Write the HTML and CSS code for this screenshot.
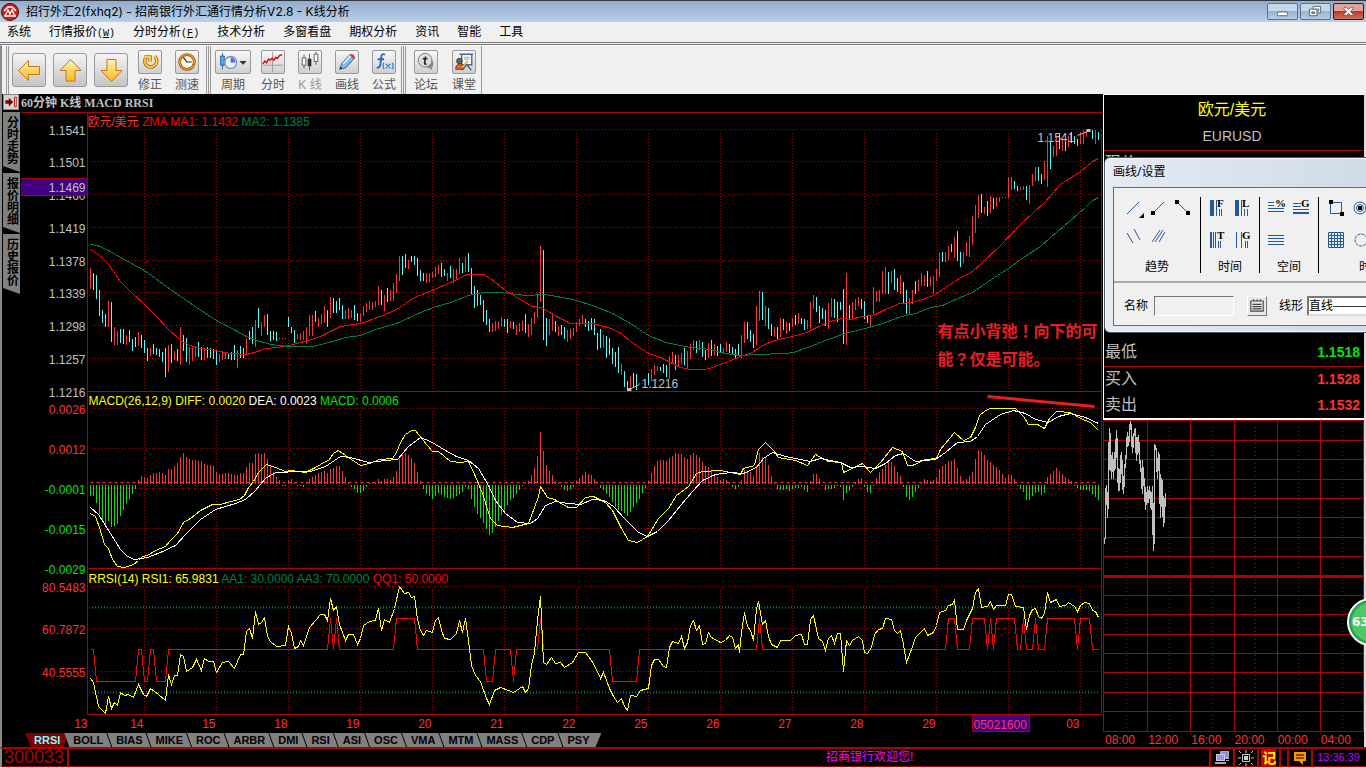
FILE: index.html
```html
<!DOCTYPE html>
<html lang="zh-CN">
<head>
    <meta charset="UTF-8">
    <meta name="viewport" content="width=device-width, initial-scale=1.0">
    <title>K线分析</title>
    <link rel="stylesheet" href="styles.css">
</head>
<body>
    <header class="titlebar">
        <svg class="logo" viewBox="0 0 18 18"><circle cx="9" cy="9" r="8.5" fill="#c8201c" stroke="#5a0c0c"/><path d="M3 8l4-4h4l4 4M4 13l3-6 2 4 2-4 3 6M3 13h12" fill="none" stroke="#fff" stroke-width="1.4"/></svg>
        <h1>招行外汇2(fxhq2) - 招商银行外汇通行情分析V2.8 - K线分析</h1>
        <div class="window-buttons">
            <button aria-label="最小化"><svg viewBox="0 0 30 16"><rect x="9.500" y="8.500" width="11" height="4" rx="1" fill="#fff" stroke="#53606e"/></svg></button>
            <button aria-label="还原"><svg viewBox="0 0 30 16"><path d="M12.500 2.500h8v7h-8zM14.500 5.500h4v2h-4z" fill="#fff" stroke="#53606e"/><path d="M8.500 5.500h8v7h-8z" fill="#fff" stroke="#53606e"/><path d="M11 8.500h3v1.500h-3z" fill="#9ab" stroke="#53606e"/></svg></button>
            <button class="close" aria-label="关闭"><svg viewBox="0 0 30 16"><path d="M10 4h3l2 2 2-2h3v1l-3 3 3 3v1h-3l-2-2-2 2h-3v-1l3-3-3-3z" fill="#fff" stroke="#5a4650" stroke-width=".8"/></svg></button>
        </div>
    </header>

    <nav class="menu">
        <a href="#">系统</a>
        <a href="#">行情报价<span>(<u>W</u>)</span></a>
        <a href="#">分时分析<span>(<u>F</u>)</span></a>
        <a href="#">技术分析</a>
        <a href="#">多窗看盘</a>
        <a href="#">期权分析</a>
        <a href="#">资讯</a>
        <a href="#">智能</a>
        <a href="#">工具</a>
    </nav>

    <svg class="defs" width="0" height="0">
        <defs>
            <linearGradient id="gold" x1="0" y1="0" x2="0" y2="1"><stop offset="0" stop-color="#fff3b8"/><stop offset="1" stop-color="#fdb813"/></linearGradient>
        </defs>
    </svg>

    <div class="toolbar">
        <div class="tool-group">
            <button class="big" aria-label="后退"><svg viewBox="0 0 32 32"><path d="M5.500 16.500l10-10v6h11v8h-11v6z" fill="url(#gold)" stroke="#c07818"/></svg></button>
            <button class="big" aria-label="向上"><svg viewBox="0 0 32 32"><path d="M16.500 5.500l10.500 11h-6v10.500h-9v-10.500h-6z" fill="url(#gold)" stroke="#c07818"/></svg></button>
            <button class="big" aria-label="向下"><svg viewBox="0 0 32 32"><path d="M16.500 27.500l10.500-11h-6v-11h-9v11h-6z" fill="url(#gold)" stroke="#c07818"/></svg></button>
            <button class="tool first"><svg viewBox="0 0 24 24"><path d="M6 6.500h6v5M17 6a6.500 6.500 0 1 1-10 2" fill="none" stroke="#b8701a" stroke-width="4"/><path d="M6 6.500h6v5M17 6a6.500 6.500 0 1 1-10 2" fill="none" stroke="#ffcf4a" stroke-width="2"/></svg><span>修正</span></button>
            <button class="tool"><svg viewBox="0 0 24 24"><circle cx="12" cy="12" r="8" fill="#fffdf0" stroke="#8a4a08" stroke-width="3"/><circle cx="12" cy="12" r="8" fill="none" stroke="#f0a020" stroke-width="1.500"/><path d="M8 7l4 5h5" fill="none" stroke="#222" stroke-width="1.300"/></svg><span>测速</span></button>
        </div>
        <div class="tool-group">
            <button class="tool wide"><svg viewBox="0 0 36 24"><path d="M6.500 2v18" stroke="#1f5f9f"/><path d="M4.500 5.500h4v10h-4z" fill="#5aa8e8" stroke="#1f5f9f"/><circle cx="15.500" cy="12.500" r="6.500" fill="#e8eef8" stroke="#7c93b0" stroke-width="1.500"/><path d="M15.500 7v5.500h5a5.500 5.500 0 0 0-5-5.500z" fill="#4a6fd0"/><path d="M25 11h8l-4 4z" fill="#333"/></svg><span>周期</span></button>
            <button class="tool"><svg viewBox="0 0 24 24"><path d="M11.500 1v22M1 15.500h22" stroke="#999"/><path d="M1 14l2-3 2 2 2-4 2 1 2-2 2 2 2-3 2 1 2-3 3-1" fill="none" stroke="#e00000" stroke-width="1.500"/></svg><span>分时</span></button>
            <button class="tool off"><svg viewBox="0 0 24 24"><path d="M5.500 4v15M11.500 3v18M18.500 1v14" stroke="#555"/><path d="M3.500 7.500h4v8h-4zM16.500 3.500h4v8h-4z" fill="#fff" stroke="#555"/><path d="M9.500 8.500h4v8h-4z" fill="#333"/></svg><span>K 线</span></button>
            <button class="tool"><svg viewBox="0 0 24 24"><path d="M4 20l2-6L15 4l5 4-9 10z" fill="#7fb8ec" stroke="#2f64a0"/><path d="M8 14l8-9" stroke="#d8efff" stroke-width="2"/><path d="M15 4l2-1q3 1 4 4l-2 2z" fill="#e03c48"/><path d="M4 20l1-3 2 2z" fill="#123"/></svg><span>画线</span></button>
            <button class="tool"><svg viewBox="0 0 24 24"><path d="M13 4q-4-2-4 3L8 15q-1 4-4 3M5 9h7" fill="none" stroke="#1c6cc4" stroke-width="2"/><path d="M12 13q-2 3 0 7M21 13q2 3 0 7M14 14l5 5M19 14l-5 5" fill="none" stroke="#2080d8" stroke-width="1.300"/></svg><span>公式</span></button>
        </div>
        <div class="tool-group forum">
            <button class="tool"><svg viewBox="0 0 24 24"><path d="M15 9q6 1 5 6-1 3-2 3l1 3-5-3q-4 0-5-4z" fill="#888"/><circle cx="11" cy="10" r="7.500" fill="#ddd" stroke="#777"/><path d="M11.500 6l-1 7q0 2 2 1M8.500 8.500h5" fill="none" stroke="#222" stroke-width="1.800"/></svg><span>论坛</span></button>
            <button class="tool"><svg viewBox="0 0 24 24"><path d="M7 3.500h15M9.500 4v11h11V4M15 15l-5 6M15 15l5 6" fill="#f4f8fc" stroke="#4a6888" stroke-width="1.500"/><path d="M12 7h6M12 9h6" stroke="#8aa"/><circle cx="7" cy="11" r="3" fill="#666" stroke="#333"/><path d="M3 20q0-6 5-6 3 0 3 6z" fill="#e06820" stroke="#803010"/><path d="M10 18l6-7" stroke="#f0b820" stroke-width="2"/></svg><span>课堂</span></button>
        </div>
    </div>

    <main class="work">
        <aside class="side">
            <button class="collapse" aria-label="收起"><svg viewBox="0 0 15 16"><path d="M1 6h4V3l5 5-5 5v-3H1z" fill="#800000"/><path d="M11.500 2.500h2v11h-2z" fill="#fff" stroke="#c00000"/></svg></button>
            <button class="side-tab">分时走势</button>
            <button class="side-tab">报价明细</button>
            <button class="side-tab">历史报价</button>
        </aside>

        <section class="analysis">
            <h2>60分钟 K线 MACD RRSI</h2>
            <svg id="chart" class="chart"></svg>
            <div class="tabs">
                <button class="active">RRSI</button>
                <button>BOLL</button>
                <button>BIAS</button>
                <button>MIKE</button>
                <button>ROC</button>
                <button>ARBR</button>
                <button>DMI</button>
                <button>RSI</button>
                <button>ASI</button>
                <button>OSC</button>
                <button>VMA</button>
                <button>MTM</button>
                <button>MASS</button>
                <button>CDP</button>
                <button>PSY</button>
            </div>
        </section>

        <section class="quote">
            <div class="quote-box">
                <div class="pair">
                    <strong>欧元/美元</strong>
                    <span>EURUSD</span>
                </div>
                <table class="prices">
                    <tr class="last"><th>现价</th><td></td></tr>
                    <tr class="low"><th>最低</th><td class="down">1.1518</td></tr>
                    <tr><th>买入</th><td>1.1528</td></tr>
                    <tr><th>卖出</th><td>1.1532</td></tr>
                </table>
            </div>
            <svg id="mini" class="mini"></svg>
            <div class="hours"><span>08:00</span><span>12:00</span><span>16:00</span><span>20:00</span><span>00:00</span><span>04:00</span></div>
        </section>
    </main>

    <footer class="status">
        <span class="code">300033</span>
        <span class="welcome">招商银行欢迎您!</span>
        <span class="cell"><svg viewBox="0 0 16 16"><path d="M6 1h9v8H6z" fill="#aaa"/><path d="M8 2h6v5H8z" fill="#88f"/><path d="M2 4h9v7H2z" fill="#ccc"/><path d="M3 5h7v5H3z" fill="#9090ff"/><path d="M1 12h11v2H1zM12 10h3v1h-3z" fill="#aaa"/></svg></span>
        <span class="cell"><svg viewBox="0 0 16 16"><path d="M4.500 4.500h7v7h-7z" fill="none" stroke="#ccc"/><path d="M6 6h4v4H6z" fill="#ccc"/><path d="M8 0v3M8 13v3M0 8h3M13 8h3M1 1l2 2M13 13l2 2M15 1l-2 2M3 13l-2 2" stroke="#ccc"/></svg></span>
        <span class="cell note">记</span>
        <span class="cell thin"></span>
        <span class="cell"><svg viewBox="0 0 16 16"><path d="M2 2h12v9h-3v4l-4-4H2z" fill="#f90"/><path d="M4 5h8M4 8h8" stroke="#000"/></svg></span>
        <time>13:36:39</time>
    </footer>

    <div class="dialog">
        <h3>画线/设置</h3>
        <div class="dialog-body">
            <div class="line-tools">
                <div class="line-group trend">
                    <svg viewBox="0 0 76 56">
                        <g fill="none" stroke="#24599c"><path d="M4 17L16 5M29 17L41 5M54 5L66 17M4 36L10 46M11 32L17 43M29 45L37 33M32 45L40 33M36 45L42 35"/></g>
                        <path d="M16 21h5v-5zM28 14h4v4h-4zM52 3h4v4h-4zM63 14h4v4h-4z"/>
                    </svg>
                    <span>趋势</span>
                </div>
                <div class="line-group">
                    <svg viewBox="0 0 44 56">
                        <path d="M2 3h4v16H2zM27 3h4v16h-4zM2 35h2v16H2z" fill="#24599c"/>
                        <path d="M8.500 3v16M11.500 12v7M13.500 12v7M33.500 3v16M36.500 12v7M39.500 12v7M5.500 35v16M7.500 35v16M10.500 44v7M12.500 44v7M28.500 35v16M33.500 35v16M37.500 44v7M39.500 44v7" stroke="#24599c"/>
                        <text x="9" y="10">F</text><text x="34" y="10">L</text><text x="9" y="42">T</text><text x="34" y="42">G</text>
                    </svg>
                    <span>时间</span>
                </div>
                <div class="line-group">
                    <svg viewBox="0 0 44 56">
                        <path d="M1 5.500h6M1 8.500h6M1 11.500h16M1 14.500h16M26 6.500h8M26 9.500h8M26 12.500h16M1 38.500h16M1 41.500h16M1 44.500h16M1 47.500h16" stroke="#24599c"/><path d="M26 15h16v2H26z" fill="#24599c"/>
                        <text x="8" y="10">%</text><text x="34" y="10">G</text>
                    </svg>
                    <span>空间</span>
                </div>
                <div class="line-group time-space">
                    <svg viewBox="0 0 76 56">
                        <g fill="none" stroke="#24599c"><path d="M2.500 5.500h11v11h-11zM.5 35.500h15v15H.5zM3.500 35v16M6.500 35v16M9.500 35v16M12.500 35v16M0 38.500h16M0 41.500h16M0 44.500h16M0 47.500h16"/><circle cx="32" cy="11" r="6"/><circle cx="32" cy="11" r="3.500"/><circle cx="33" cy="43" r="6" stroke-dasharray="3 1"/></g>
                        <path d="M1 3h4v4H1zM12 15h4v4h-4zM30 9h4v4h-4z"/>
                    </svg>
                    <span>时空</span>
                </div>
            </div>
            <div class="line-options">
                <label for="lineName">名称</label>
                <input id="lineName" type="text">
                <button aria-label="列表"><svg viewBox="0 0 16 16"><path d="M2.500 3.500h11v9h-11zM4 6.500h8M4 8.500h8M4 10.500h8M5 2v2M8 2v2M11 2v2" fill="none" stroke="#444"/></svg></button>
                <label for="lineShape">线形</label>
                <select id="lineShape"><option>直线────────</option></select>
            </div>
        </div>
    </div>

    <button class="ball">63</button>
    <script src="chart.js"></script>
</body>
</html>
```
FILE: styles.css
```css
* {
    box-sizing: border-box;
}
body {
    margin: 0;
    height: 100vh;
    display: flex;
    flex-direction: column;
    position: relative;
    overflow: hidden;
    background: #f0f0f0;
    color: #000;
    font: 12px/16px "Liberation Sans", "Noto Sans CJK SC", sans-serif;
}
button, input, select {
    font: inherit;
    padding: 0;
    margin: 0;
    border-radius: 0;
}
svg {
    display: block;
}
h1, h2, h3 {
    margin: 0;
    font-size: 12px;
    font-weight: normal;
}
.defs {
    position: absolute;
}

/* title bar */
.titlebar {
    height: 22px;
    flex: none;
    display: flex;
    align-items: center;
    border-top: 1px solid #33363c;
    background: linear-gradient(#93acca, #b9d0ea);
}
.logo {
    width: 18px;
    height: 18px;
    margin: 0 7px 0 1px;
}
.titlebar h1 {
    flex: 1;
    font-family: Inter, "Noto Sans CJK SC", sans-serif;
}
.window-buttons {
    display: flex;
    gap: 2px;
    padding-right: 2px;
}
.window-buttons button {
    width: 31px;
    height: 17px;
    border: 1px solid #5d7188;
    border-radius: 2px;
    background: linear-gradient(#c5d7ea 45%, #9cb4cf 50%, #b6cbe2);
}
.window-buttons .close {
    border-color: #43141e;
    background: linear-gradient(#e2a397 45%, #b83c28 50%, #d0725a);
}
.window-buttons svg {
    width: 29px;
    height: 15px;
}

/* menu */
.menu {
    height: 23px;
    flex: none;
    display: flex;
    gap: 18px;
    padding: 2px 7px;
    border-bottom: 3px double #777;
}
.menu a {
    color: #000;
    text-decoration: none;
}
.menu span {
    font-family: "Liberation Mono", monospace;
    font-size: 10px;
}

/* toolbar */
.toolbar {
    height: 49px;
    flex: none;
    display: flex;
    border-left: 2px solid #8a8a8a;
    border-top: 1px solid #fff;
}
.tool-group {
    display: flex;
    align-items: flex-start;
    margin-left: 4px;
    padding: 4px 5px 0 4px;
    border-left: 3px double #999;
    border-right: 1px solid #999;
}
.tool-group:first-child {
    padding-right: 7px;
    padding-left: 3px;
}
.tool-group + .tool-group {
    margin-left: 1px;
}
.tool-group.forum {
    padding-left: 8px;
}
.big {
    width: 34px;
    height: 34px;
    margin: 3px 7px 0 0;
    border: 1px solid #999;
    border-radius: 3px;
    background: linear-gradient(#f4f4f4, #c4c4c4);
}
.tool {
    width: 24px;
    margin-right: 13px;
    border: 0;
    background: none;
    color: #555;
    display: flex;
    flex-direction: column;
    align-items: center;
    white-space: nowrap;
}
.tool.first {
    margin-left: 3px;
}
.forum .tool {
    margin-right: 14px;
}
.tool-group .tool:last-child {
    margin-right: 0;
}
.tool svg {
    width: 24px;
    height: 24px;
    flex: none;
    border: 1px solid #999;
    border-radius: 2px;
    background: linear-gradient(#f8f8f8, #cfcfcf);
}
.tool.wide {
    width: 36px;
    margin-right: 10px;
}
.tool.wide svg {
    width: 36px;
}
.tool span {
    margin-top: 3px;
}
.tool.off {
    color: #999;
}

/* work area */
.work {
    flex: 1;
    min-height: 0;
    display: flex;
    border-left: 2px solid #8a8a8a;
    background: #000;
}
.side {
    width: 18px;
    flex: none;
    padding-left: 1px;
}
.collapse {
    width: 16px;
    height: 16px;
    border: 1px solid #888;
    background: #d4d4d4;
    display: block;
    margin-bottom: 2px;
}
.collapse svg {
    width: 14px;
    height: 14px;
}
.side-tab {
    width: 17px;
    height: 60px;
    display: block;
    margin-bottom: 1px;
    padding-bottom: 4px;
    border: 0;
    background: #808080;
    color: #000;
    font-size: 12px;
    font-weight: bold;
    writing-mode: vertical-rl;
    clip-path: polygon(0 0, 100% 0, 100% 100%, 0 90%);
}
.analysis {
    flex: 1;
    min-width: 0;
    margin-left: 1px;
    display: flex;
    flex-direction: column;
}
.analysis h2 {
    height: 19px;
    border-bottom: 1px solid #b00000;
    color: #c0c0c0;
    font: bold 12px/18px "Liberation Serif", "Noto Sans CJK SC", serif;
}
.chart {
    width: 100%;
    flex: 1;
    min-height: 0;
    font-size: 12px;
}
.tabs {
    height: 14px;
    display: flex;
    padding-left: 4px;
}
.tabs button {
    height: 14px;
    margin-right: -4px;
    padding: 0 8px 0 9px;
    border: 0;
    background: #808080;
    color: #000;
    font-size: 11px;
    line-height: 14px;
    font-weight: bold;
    clip-path: polygon(0 0, calc(100% - 5px) 0, 100% 100%, 5px 100%);
}
.tabs .active {
    padding: 0 9px;
    margin-right: -5px;
    background: #800000;
    color: #7ff;
    clip-path: polygon(0 0, 100% 0, calc(100% - 6px) 100%, 6px 100%);
}
.tabs button:last-child {
    padding-right: 12px;
    clip-path: polygon(0 0, 100% 0, calc(100% - 6px) 100%, 5px 100%);
}

/* quote panel */
.quote {
    width: 263px;
    flex: none;
    display: flex;
    flex-direction: column;
    border-right: 2px solid #ddd;
}
.quote-box {
    height: 326px;
    flex: none;
    display: flex;
    flex-direction: column;
    border: 1px solid #fff;
    border-right: 0;
    border-bottom-width: 2px;
}
.pair {
    height: 56px;
    flex: none;
    display: flex;
    flex-direction: column;
    align-items: center;
    border-bottom: 1px solid #b00000;
    padding-right: 4px;
}
.pair strong {
    margin-top: 5px;
    color: #ff0;
    font-size: 16px;
    line-height: 20px;
    font-weight: normal;
}
.pair span {
    margin-top: 8px;
    color: #c0c0c0;
    font-size: 14px;
    line-height: 16px;
}
.prices {
    flex: 1;
    width: 100%;
    border-collapse: collapse;
}
.prices tr {
    height: 26px;
}
.prices th {
    padding: 0 1px;
    color: #c0c0c0;
    font-size: 16px;
    line-height: 20px;
    font-weight: normal;
    text-align: left;
}
.prices td {
    padding: 0 4px;
    color: #ff3232;
    font-size: 14px;
    font-weight: bold;
    text-align: right;
}
.prices .last {
    height: 188px;
    vertical-align: top;
}
.prices .last th {
    padding-top: 2px;
}
.prices .low {
    height: 27px;
    border-bottom: 1px solid #b00000;
}
.prices .down {
    color: #00e600;
}
.mini {
    width: 100%;
    flex: 1;
    min-height: 0;
}
.hours {
    height: 15px;
    display: grid;
    grid-template-columns: repeat(6, 1fr);
    padding-left: 2px;
    color: #ff3232;
}

/* status bar */
.status {
    height: 20px;
    flex: none;
    display: flex;
    border: solid #b00000;
    border-width: 2px 0 1px;
    border-left: 2px solid #8a8a8a;
    background: #000;
    margin-bottom: 1px;
}
.code {
    padding: 0 3px 0 2px;
    border-right: 2px solid #b00000;
    color: #b00000;
    font-size: 18px;
    line-height: 17px;
}
.welcome {
    flex: 1;
    padding-left: 461px;
    color: #f0f;
    text-align: center;
}
.cell {
    width: 24px;
    border-left: 2px solid #b00000;
    display: flex;
    align-items: center;
    justify-content: center;
}
.cell svg {
    width: 16px;
    height: 16px;
}
.cell.note {
    width: 22px;
    color: #ff0;
    font-size: 14px;
    font-weight: bold;
    background: linear-gradient(90deg, #000 2px, #c00 2px, #c00 17px, #000 17px);
}
.cell.thin {
    width: 8px;
}
.status time {
    padding: 0 6px 0 4px;
    border-left: 2px solid #b00000;
    color: #c800ff;
    font-size: 11px;
}

/* drawing tools window, lies over the quote panel */
.dialog {
    position: absolute;
    top: 157px;
    left: calc(100% - 262px);
    width: 340px;
    height: 176px;
    padding: 6px 8px 7px;
    border: 1px solid #4c565f;
    border-radius: 6px;
    background: linear-gradient(90deg, #e4ebf3, #cbd7e4);
    box-shadow: inset 0 0 0 1px #f4f8fc;
}
.dialog h3 {
    height: 23px;
    font-family: "Noto Sans", "Noto Sans CJK SC", sans-serif;
}
.dialog-body {
    height: 139px;
    border: 1px solid #6c6c6c;
    background: #f0f0f0;
}
.line-tools {
    display: flex;
    height: 95px;
    padding: 9px 0;
    border-bottom: 2px solid #a8a8a8;
}
.line-group {
    width: 59px;
    height: 76px;
    flex: none;
    border-right: 1px solid #000;
    display: flex;
    flex-direction: column;
    align-items: center;
}
.line-group svg {
    width: 44px;
    height: 56px;
    flex: none;
}
.line-group text {
    font: bold 11px "Liberation Serif", serif;
    fill: #000;
}
.line-group span {
    margin-top: 6px;
}
.line-group.trend {
    width: 87px;
}
.line-group.trend svg, .line-group.time-space svg {
    width: 76px;
    align-self: flex-start;
    margin-left: 9px;
}
.line-group.time-space {
    width: 104px;
    border: 0;
}
.line-options {
    display: flex;
    align-items: center;
    padding: 13px 0 0 10px;
}
.line-options input {
    width: 80px;
    height: 20px;
    margin: 0 13px 0 6px;
    border: 1px solid;
    border-color: #777 #fff #fff #777;
    background: #f0f0f0;
}
.line-options button {
    width: 20px;
    height: 20px;
    margin-right: 12px;
    border: 1px solid;
    border-color: #fff #777 #777 #fff;
    background: #e8e8e8;
}
.line-options select {
    width: 110px;
    height: 20px;
    margin-left: 4px;
    border: 2px solid;
    border-color: #777 #ddd #ddd #777;
    background: #fff;
    appearance: none;
}
.ball {
    position: absolute;
    left: calc(100% - 19px);
    top: 598px;
    width: 48px;
    height: 48px;
    padding-left: 3px;
    border: 2px solid #fff;
    border-radius: 50%;
    background: radial-gradient(circle, #4cc864 60%, #2a9a58 66%);
    color: #fff;
    font-family: "DejaVu Sans", sans-serif;
    font-weight: bold;
    text-align: left;
}
```
FILE: chart.js
```js
// bars 3px apart: r/c = up/down colour, then high and low
const bars = `r268,289 c273,290 c275,299 c290,316 c310,323 c314,327 r301,327 c302,342 r327,345 r331,345
c329,343 c329,344 r335,345 c330,342 c339,351 c337,347 r332,346 c335,348 c340,353 c348,361
r348,356 c344,354 c348,355 c349,357 c352,362 c348,377 r345,372 c344,363 r351,360 c349,361
r327,365 c335,351 c338,362 r347,365 r348,361 r346,357 c342,357 c347,360 r348,360 c347,358
c348,358 c349,359 c350,365 r354,362 r352,360 r353,359 c353,359 c352,360 c345,360 r350,368
c346,358 c348,358 r338,354 c331,340 c327,344 r320,347 c308,328 r322,336 r315,327 c314,335
c331,341 c331,340 c332,341 r338,339 r338,339 r338,339 c317,327 c327,333 c330,343 r334,339
r333,340 r331,340 r327,344 r315,336 r315,336 c311,322 r318,327 r314,324 r306,323 c310,327
r297,318 c298,313 c301,313 c298,310 c305,319 r310,319 r308,319 r310,318 c305,320 c313,321
r313,322 r306,316 r303,312 r301,310 r302,310 r301,307 r286,305 c290,305 r295,311 c288,302
r290,301 r283,301 r274,293 r256,281 c256,275 c254,268 r260,269 c256,262 c256,265 c258,276
c270,281 c273,281 r273,283 r273,282 r272,278 r267,277 r265,274 c263,277 c269,276 r273,281
c266,278 r269,283 r269,279 r258,274 c263,273 r257,272 c253,272 c268,294 c286,308 c290,306
c295,305 c300,322 c310,325 c319,332 r323,332 r321,331 r321,329 r317,327 c319,327 c319,333
r321,328 c322,329 r325,335 r323,332 r321,331 c314,333 r324,337 r318,335 r312,324 r294,318
r246,302 c250,340 c318,346 r319,335 r313,331 c321,332 r326,336 c325,335 c327,339 r330,342
r329,339 r328,336 r322,332 r319,326 r315,324 c319,327 c321,331 c318,330 c319,335 c333,350
c329,348 r335,348 c336,358 c338,355 c348,364 c352,367 c347,373 r364,375 c371,387 c381,391
r376,389 c373,387 c374,390 r383,384 r383,384 r383,384 c373,385 r369,381 r365,375 r366,371
c367,371 c364,373 c365,377 r356,379 r352,364 c355,370 r355,366 r353,364 c348,365 r351,369
r344,359 r340,350 c341,353 r340,350 c342,357 c350,360 r343,358 c340,356 r344,355 c346,356
c344,352 r348,354 r342,352 c344,353 c347,355 c349,359 c344,356 r335,358 r322,343 c322,339
c330,342 c334,348 r306,345 r291,321 c292,320 r306,326 c308,329 c324,336 r327,337 c327,340
r318,337 c319,330 r322,334 c323,331 r318,327 c315,325 r313,324 c318,324 c319,330 r320,329
r302,329 r295,309 c297,312 c306,323 c308,319 c310,326 r303,329 r298,317 c299,318 c302,322
c302,310 c289,344 r273,345 c305,319 r302,319 r299,310 r297,306 c299,309 c301,319 c316,323
r315,327 r287,314 r291,302 r290,302 r271,294 r267,294 c272,294 r271,283 c269,290 c278,292
r275,294 c282,303 c290,314 r298,314 r290,304 c281,294 r280,291 r273,286 r275,286 c271,287
r277,286 r276,294 r269,281 r253,277 c252,262 r252,262 r246,260 c244,252 r237,258 c231,261
c252,267 r252,263 r242,256 r236,257 r216,245 r205,233 r195,218 c194,213 r207,214 c201,216
r196,213 c198,209 r197,207 r197,202 r197,198 r197,198 r177,198 r177,190 c181,189 c186,191
r187,190 r186,190 c186,200 r185,204 r174,186 r167,181 c167,181 c174,184 r161,180 r136,187
c141,169 r146,157 r136,156 c134,149 r140,151 c142,151 r136,147 c132,143 c136,144 c139,146
r132,144 r130,144 r130,137 c130,132 c130,139 r130,144 c132,140`.split(/\s+/);

const macd = [-11,-11,-18,-29,-37,-41,-36,-42,-41,-39,-31,-25,-18,-14,-9,-4,4,8,7,6,9,11,11,12,11,9,15,15,18,21,
27,31,27,25,24,24,23,23,20,19,19,18,12,10,10,11,11,10,9,9,11,11,17,21,21,30,31,30,31,25,
19,12,7,4,-1,-1,4,5,2,-1,-1,-2,2,5,7,9,11,12,13,11,15,16,18,18,13,7,2,-2,-4,-8,
-8,-6,-2,1,2,1,5,3,5,5,4,7,13,25,30,31,29,26,21,12,3,-4,-9,-11,-14,-11,-8,-10,-12,-13,
-14,-13,-11,-9,-7,-2,-4,-14,-22,-29,-33,-38,-44,-50,-48,-42,-36,-30,-25,-20,-15,-13,-9,-5,-1,1,3,9,16,28,
52,33,19,13,9,3,1,-2,-5,-6,-4,-2,3,6,9,12,10,9,5,2,-3,-5,-9,-12,-17,-22,-25,-26,-28,-31,
-27,-22,-18,-14,-8,-3,3,11,18,23,24,24,23,26,28,31,30,30,27,25,29,31,29,27,22,18,17,13,10,7,
4,5,4,2,-2,-4,-2,4,14,14,12,8,18,31,27,26,19,8,2,-4,-5,-5,-4,-6,-4,-3,-3,-2,-5,-7,
3,10,10,5,-1,-5,-4,-4,-3,-1,-2,-15,-8,-6,-2,2,5,6,-2,-7,-8,-1,6,12,15,19,23,22,18,12,
8,-2,-12,-15,-12,-7,-3,2,5,4,3,4,7,15,18,20,23,23,25,16,8,3,5,8,12,25,34,32,29,24,
22,19,17,14,10,6,9,9,5,-1,-4,-7,-15,-15,-11,-8,-7,-10,-8,7,10,13,16,13,10,7,5,3,-1,-3,
-5,-5,-5,-6,-9,-12,-15];

const ma1 = "90,249 99,255 108,264 120,281 132,293 144,304 156,316 168,329 178,338 183,342 190,345 200,348 215,350 230,353 246,354 254,352 265,348 276,347 289,345 300,342 308,340 320,336 330,331 340,326 360,323 380,316 396,309 414,297 432,290 450,282 467,274 483,274 490,278 505,290 520,299 532,306 541,307 554,315 570,323 592,323 608,327 621,333 630,341 648,353 660,357 670,362 680,367 690,369 705,369 712,367 725,362 740,356 752,352 762,345 774,340 792,336 806,332 818,326 830,321 841,318 850,319 858,317 875,314 885,309 899,303 912,302 925,298 935,294 945,287 957,279 972,271 982,262 1000,245 1020,224 1044,202 1060,184 1080,171 1092,161 1098,158";
const ma2 = "90,244 97,245 110,251 120,257 144,270 170,289 196,307 216,320 235,330 246,336 254,339 270,344 288,346 312,346 325,343 345,337 360,335 375,329 396,323 420,312 433,307 450,302 468,295 483,292 502,292 525,295 545,294 573,299 595,306 612,313 630,323 648,335 665,342 690,347 710,349 724,353 740,355 757,354 785,353 793,352 810,346 825,340 845,333 872,326 885,322 901,316 915,313 930,307 942,305 955,299 972,292 985,283 1000,273 1008,268 1020,259 1040,246 1050,237 1070,220 1085,207 1092,200 1098,197";
const diff = "90,513 95,516 99,527 104,544 108,548 112,559 117,566 124,567 133,564 138,560 142,556 147,555 155,550 165,546 170,540 177,533 183,522 190,518 200,510 212,504 220,504 230,501 239,499 244,495 248,487 253,481 258,472 266,464 275,467 285,471 291,470 305,472 315,467 325,461 328,460 333,453 338,450 345,455 360,465 369,463 379,459 392,458 396,452 400,442 405,434 411,430 415,430 422,439 432,451 438,451 450,461 460,462 468,461 475,476 482,493 490,518 497,525 512,527 528,523 534,507 538,496 540,486 547,497 554,499 568,507 576,507 585,497 593,496 605,502 612,510 620,526 628,540 637,542 647,536 658,518 668,508 676,495 688,486 696,473 702,471 720,470 740,474 743,468 754,465 758,449 765,442 773,450 778,457 795,460 807,465 815,454 828,461 841,462 843,472 862,463 870,472 880,462 892,447 902,451 907,465 912,465 925,459 936,458 940,449 954,432 963,440 970,437 975,427 979,415 985,410 990,408 1015,408 1023,416 1028,424 1037,424 1044,428 1049,418 1056,411 1070,412 1080,418 1090,422 1098,430";
const dea = "90,507 98,514 110,533 120,549 127,556 134,559 147,557 160,552 175,545 185,534 200,519 215,509 235,503 245,499 255,490 265,478 275,472 300,471 310,471 325,466 340,456 350,457 368,462 385,460 397,459 408,446 420,437 430,441 445,450 456,456 468,460 478,468 488,485 495,500 505,513 517,522 530,523 537,518 545,505 555,501 568,503 580,504 592,499 604,500 613,506 625,519 638,532 647,536 657,531 668,520 680,505 692,491 702,480 715,474 730,472 743,473 756,467 763,458 772,452 785,456 800,459 810,461 820,458 840,462 850,467 862,466 875,468 885,463 895,455 903,453 915,461 935,459 945,452 957,442 970,441 977,436 985,424 1000,414 1013,410 1025,413 1035,419 1048,422 1058,416 1070,413 1085,417 1098,423";
const rsi = "90,678 93,682 98,706 105,713 108,696 111,708 114,702 117,705 120,692 124,695 128,694 133,697 138,684 143,694 146,696 150,688 158,694 165,700 168,674 171,684 174,675 177,675 180,654 183,656 186,671 192,667 196,659 201,670 204,658 208,661 213,661 216,672 222,662 228,661 234,668 240,654 243,654 246,631 249,628 252,638 255,611 258,624 261,622 264,617 267,636 270,641 276,646 285,645 288,626 291,633 294,648 298,646 300,640 303,645 309,627 315,620 320,614 324,614 327,620 330,598 333,610 336,606 339,624 345,640 348,634 353,634 357,644 360,638 363,625 369,621 375,620 378,608 381,630 384,619 389,622 394,608 399,586 404,593 408,592 411,597 414,596 417,619 420,630 423,635 426,630 432,632 435,620 438,617 441,630 444,638 450,639 456,633 459,620 462,632 465,618 468,640 471,665 475,675 480,681 486,698 489,704 494,690 500,687 508,690 513,692 522,686 525,692 528,688 531,665 534,652 537,620 540,596 543,662 546,664 551,657 555,663 560,662 564,667 572,662 578,652 585,652 591,660 597,671 600,678 603,672 609,688 613,696 617,702 621,698 624,706 627,710 630,695 636,696 640,690 648,688 651,665 654,659 658,659 663,666 666,667 669,647 672,641 678,643 681,636 684,648 687,642 690,625 693,620 696,630 699,625 702,644 705,643 708,632 711,637 720,642 725,640 729,635 732,637 735,648 738,644 739,652 741,632 744,612 747,626 750,630 753,640 756,608 758,601 762,624 765,620 768,636 771,644 777,647 780,640 790,640 795,635 801,634 804,644 807,644 810,619 813,615 818,638 822,641 825,650 828,638 831,635 834,643 837,633 840,633 843,671 846,640 849,645 852,640 858,636 862,640 864,652 867,653 871,647 874,634 878,629 882,628 885,618 891,619 894,630 897,633 900,630 903,644 906,662 912,646 915,637 924,628 927,635 933,632 936,625 939,612 945,610 948,605 952,604 954,599 957,629 963,629 966,620 972,608 975,592 978,588 981,607 987,606 990,601 993,609 996,605 1005,605 1008,594 1011,594 1015,606 1023,607 1026,629 1029,615 1032,609 1035,608 1038,616 1041,618 1044,613 1047,592 1050,602 1056,599 1059,606 1065,605 1068,602 1074,606 1077,611 1080,605 1084,602 1089,603 1092,610 1095,611 1098,617";
const qq = "90,649 93,649 96,681 135,681 138,649 141,649 144,681 147,681 150,649 153,649 156,681 165,681 168,649 327,649 330,618 333,649 336,618 339,649 393,649 396,618 414,618 417,649 483,649 486,681 492,681 495,649 510,649 513,681 516,649 537,649 540,618 543,649 609,649 612,681 636,681 639,649 756,649 759,618 762,649 945,649 948,618 954,618 957,649 969,649 972,618 984,618 987,649 990,618 993,649 996,618 1014,618 1017,649 1020,649 1023,618 1026,649 1032,649 1035,618 1038,649 1044,649 1047,618 1074,618 1077,649 1080,618 1089,618 1092,649 1098,649";
const tick = "1104,543 1104,538 1105,538 1105,494 1106,485 1107,510 1107,517 1108,485 1109,428 1110,446 1111,478 1112,452 1113,478 1114,452 1115,468 1116,430 1117,460 1118,490 1119,490 1120,462 1121,452 1122,480 1123,493 1124,470 1126,452 1127,432 1128,445 1130,421 1131,430 1132,452 1133,436 1134,432 1135,428 1136,460 1137,440 1138,435 1139,458 1140,465 1141,473 1142,493 1142,460 1143,485 1144,478 1145,509 1146,492 1147,502 1147,486 1148,502 1149,486 1150,502 1151,509 1152,486 1153,550 1154,525 1154,444 1156,450 1157,478 1158,452 1159,458 1160,517 1161,478 1162,485 1163,526 1164,512 1165,493";

const RED = "#b00000";

// scaled canvas: data space starts at (x0, y0) and is w by h
function canvas(id, x0, y0, w, h) {
    const svg = document.getElementById(id);
    const sx = svg.clientWidth / w, sy = svg.clientHeight / h;
    // keep every stroke in the middle of a pixel
    const X = x => Math.round((x - x0) * sx) + 0.5, Y = y => Math.round((y - y0) * sy) + 0.5;
    let out = "";
    return {
        line(x1, y1, x2, y2, color, extra = "") {
            out += `<line x1="${X(x1)}" y1="${Y(y1)}" x2="${X(x2)}" y2="${Y(y2)}" stroke="${color}" ${extra}/>`;
        },
        bar(x, y1, y2, color) {
            out += `<rect x="${X(x) - 0.5}" y="${Y(y1) - 0.5}" width="1" height="${Math.max(1, Y(y2) - Y(y1))}" fill="${color}"/>`;
        },
        path(points, color, extra = "") {
            const p = points.split(" ").map(s => { const [x, y] = s.split(",").map(Number); return X(x) + "," + Y(y); });
            out += `<polyline points="${p.join(" ")}" fill="none" stroke="${color}" shape-rendering="crispEdges" ${extra}/>`;
        },
        box(x, y, bw, bh) {
            out += `<rect x="${X(x)}" y="${Y(y)}" width="${bw}" height="${bh}" fill="#400080" stroke="${RED}"/>`;
        },
        text(x, y, s, color, extra = "") {
            out += `<text x="${X(x)}" y="${Y(y)}" fill="${color}" ${extra}>${s}</text>`;
        },
        done() { svg.innerHTML = out; }
    };
}

function drawChart() {
    const c = canvas("chart", 21, 113, 1082, 620);
    const dots = 'stroke-dasharray="1 2" stroke-dashoffset="0.5"', end = 'text-anchor="end"';
    const days = ["14", "15", "18", "19", "20", "21", "22", "25", "26", "27", "28", "29", "", "03"];

    days.forEach((d, i) => {
        const x = 144 + i * 72;
        [[130, 391], [408, 568], [587, 714]].forEach(([a, b]) => c.line(x, a, x, b, RED, dots));
        c.text(x - 1, 727, d, "#ff3232", end);
    });
    c.text(87, 727, "13", "#ff3232", end);
    [129, 161, 194, 227, 260, 292, 325, 358, 408, 448, 488, 528, 586, 628, 671].forEach(y => c.line(89, y, 1101, y, RED, dots));
    c.line(87, 113, 87, 714, RED);
    c.line(1101, 129, 1101, 714, RED);
    [391, 568, 714].forEach(y => c.line(87, y, 1101, y, RED));
    [607, 692].forEach(y => c.line(89, y, 1099, y, "#008040", 'stroke-dasharray="1 2" stroke-dashoffset="0.5" stroke-width="2"'));

    const labels = [["1.1541", 134], ["1.1501", 166], ["1.1460", 199], ["1.1419", 232], ["1.1378", 265], ["1.1339", 297], ["1.1298", 330], ["1.1257", 363], ["1.1216", 396]];
    labels.forEach(([s, y]) => c.text(85, y, s, "#c0c0c0", end));
    c.box(20, 178, 67, 17);
    c.text(85, 191, "1.1469", "#c0c0c0", end);
    [["0.0026", 413], ["0.0012", 453], ["80.5483", 591], ["60.7872", 633], ["40.5555", 676]].forEach(([s, y]) => c.text(85, y, s, "#ff3232", end));
    [["-0.0001", 493], ["-0.0015", 533], ["-0.0029", 573]].forEach(([s, y]) => c.text(85, y, s, "#00e600", end));

    bars.forEach((b, i) => {
        const [hi, lo] = b.slice(1).split(",").map(Number);
        c.bar(90 + i * 3, hi, lo, b[0] === "r" ? "#ff3232" : "#54fcfc");
    });
    c.path(ma1, "#ff0000");
    c.path(ma2, "#008040");

    c.line(90, 482, 1096, 482, "#ff3232", 'stroke-dasharray="3 3"');
    macd.forEach((v, i) => {
        if (v > 0) c.bar(90 + i * 3, 484 - v, 484, "#ff3232");
        else c.bar(90 + i * 3, 485, 485 - v, "#00e600");
    });
    c.path(diff, "#ffff00");
    c.path(dea, "#ffffff");
    c.path(qq, "#ff0000");
    c.path(rsi, "#ffff00");

    c.text(87, 125, '欧元/美元 <tspan fill="#ff0000">ZMA MA1: 1.1432</tspan> <tspan fill="#008040">MA2: 1.1385</tspan>', "#ff3232");
    c.text(88, 404, 'MACD(26,12,9) DIFF: 0.0020 <tspan fill="#fff">DEA: 0.0023</tspan> <tspan fill="#00e600">MACD: 0.0006</tspan>', "#ffff00");
    c.text(88, 582, 'RRSI(14) RSI1: 65.9831 <tspan fill="#008040">AA1: 30.0000 AA3: 70.0000</tspan> <tspan fill="#ff0000">QQ1: 50.0000</tspan>', "#ffff00");

    c.text(1037, 141, "1.1541", "#c0c0c0");
    c.line(1077, 135, 1087, 131, "#c0c0c0");
    c.line(1086, 130, 1090, 130, "#c0c0c0", 'stroke-width="3"');
    c.text(641, 387, "1.1216", "#c0c0c0");
    c.line(639, 384, 629, 389, "#c0c0c0");
    c.line(627, 389, 631, 389, "#c0c0c0", 'stroke-width="3"');

    const note = 'font-size="16" font-weight="bold"';
    c.text(937, 336, '有点小背弛<tspan class="mark" font-family="Noto Sans CJK TC" lang="zh-TW">！</tspan>向下的可', "#ed1c24", note);
    c.text(937, 364, '能<tspan class="mark" font-family="Noto Sans CJK TC" lang="zh-TW">？</tspan>仅是可能。', "#ed1c24", note);
    c.line(987, 396, 1094, 406, "#ed1c24", 'stroke-width="3"');

    c.box(972, 714, 57, 17);
    c.text(973, 728, "05021600", "#ff3264");
    c.done();
}

function drawMini() {
    const c = canvas("mini", 1103, 420, 261, 312);
    [420, 440, 459, 479, 498, 517, 537, 556, 595, 614, 634, 653, 672, 692, 711, 731].forEach(y => c.line(1103, y, 1363, y, RED));
    c.line(1103, 576, 1363, 576, RED, 'stroke-width="3"');
    [1103, 1147, 1190, 1234, 1277, 1320, 1363].forEach(x => c.line(x, 420, x, 731, RED));
    [1126, 1169, 1212, 1255, 1298, 1342].forEach(x => c.line(x, 423, x, 731, RED, 'stroke-dasharray="1 3" stroke-dashoffset="0.5"'));
    c.path(tick, "#c0c0c0", 'stroke-width="1.5"');
    c.done();
}

function draw() {
    drawChart();
    drawMini();
}
window.onload = draw;
window.onresize = draw;
```
